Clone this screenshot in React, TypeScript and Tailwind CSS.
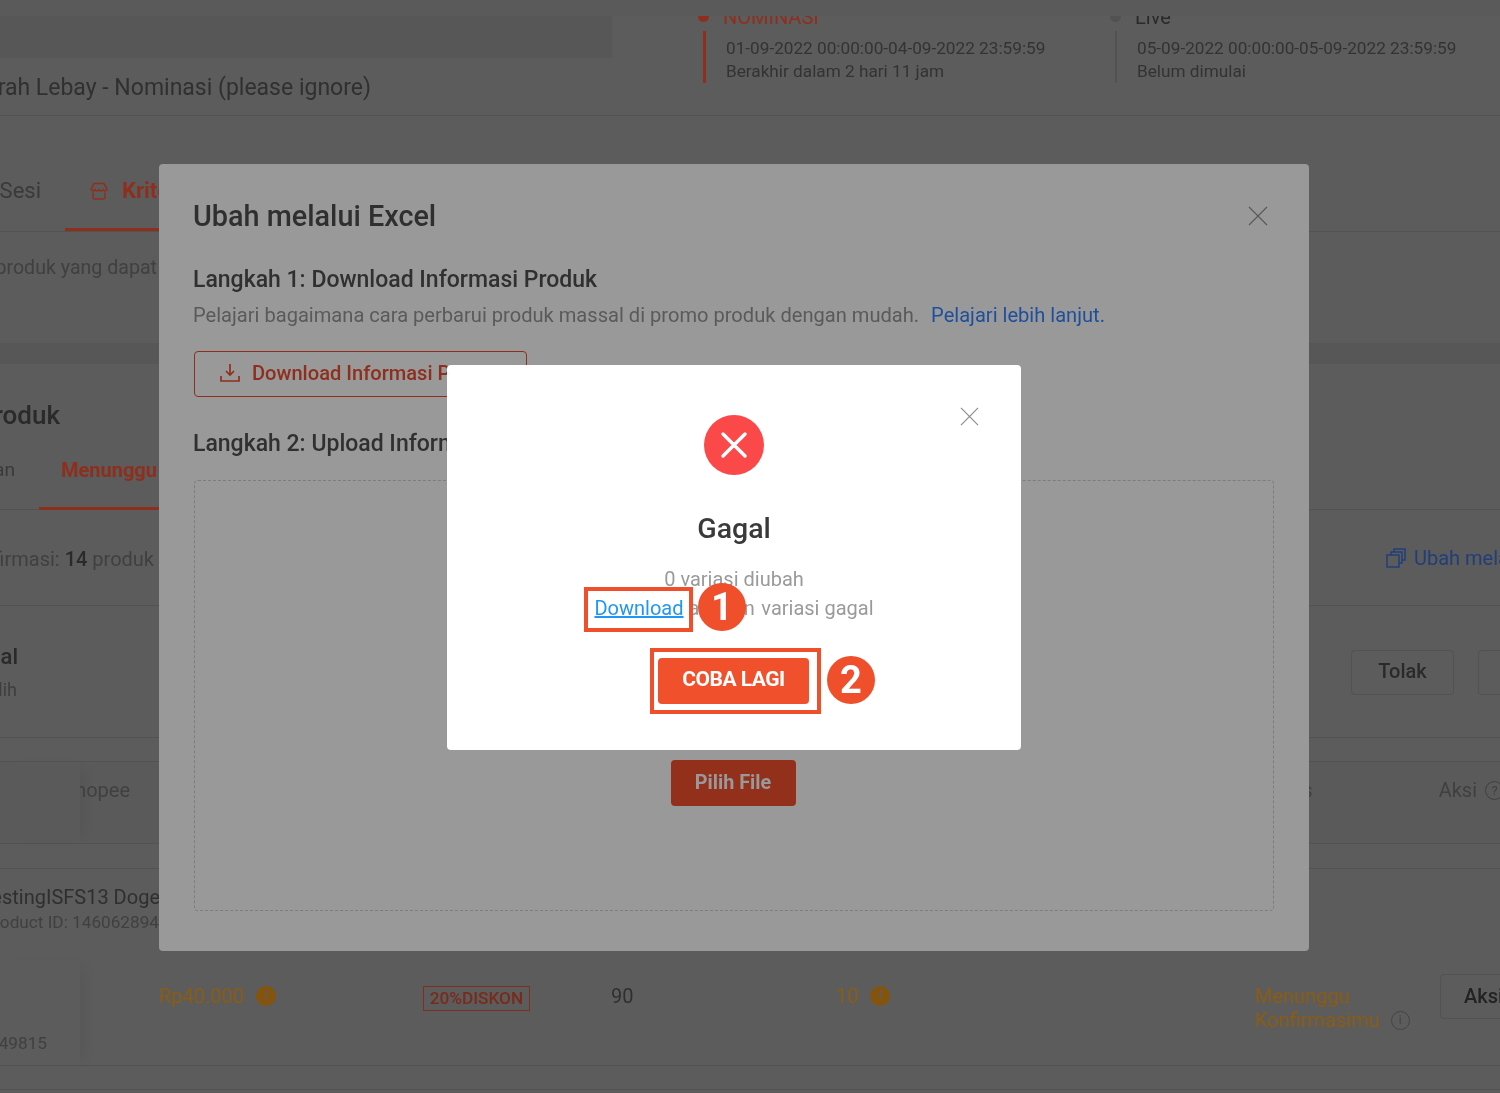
import React from "react";

function CloseIcon({ className }: { className: string }) {
  return (
    <svg viewBox="0 0 20 20" className={className} fill="none" stroke="currentColor" strokeWidth="1.2">
      <path d="M1 1l18 18M19 1L1 19" />
    </svg>
  );
}

function AlertDot() {
  return (
    <span className="flex h-5 w-5 items-center justify-center rounded-full bg-[#85540c] text-[14px] font-bold leading-none text-[#5c5c5c]">
      !
    </span>
  );
}

function ClippedLeft({ width, className, children }: { width: string; className?: string; children: React.ReactNode }) {
  return (
    <div className={`flex justify-end overflow-hidden whitespace-nowrap ${width} ${className ?? ""}`}>
      <span className="shrink-0">{children}</span>
    </div>
  );
}

function Timeline({ line, dot, label, labelColor, date, note, lineWidth }: {
  line: string; dot: string; label: string; labelColor: string; date: string; note: string; lineWidth: string;
}) {
  return (
    <div className="flex flex-col">
      <div className="-mt-[7px] flex h-[15px] items-center">
        <span className={`ml-[-5px] h-[11px] w-[11px] rounded-full ${dot}`} />
        <span className={`ml-[14px] text-[20px] leading-none ${labelColor}`}>{label}</span>
      </div>
      <div className="mt-[7px] flex h-[52px] gap-[20px]">
        <div className={`h-full ${lineWidth} ${line}`} />
        <div className="mt-[6px] text-[17.2px] leading-[23px] text-[#333]">
          <div className="whitespace-nowrap">{date}</div>
          <div className="whitespace-nowrap">{note}</div>
        </div>
      </div>
    </div>
  );
}

function Page() {
  return (
    <div className="flex h-full flex-col overflow-hidden bg-[#5c5c5c] font-['Roboto',sans-serif]">
      <div className="h-4 shrink-0 bg-[#5a5a5a]" />
      <div className="flex h-[100px] shrink-0 overflow-hidden border-b border-[#525252]">
        <div className="w-[612px] shrink-0">
          <div className="h-[42px] bg-[#575757]" />
          <ClippedLeft width="w-[371px]" className="mt-[16px] text-[23px] leading-[28px] text-[#303030]">
            Tes Murah Lebay - Nominasi (please ignore)
          </ClippedLeft>
        </div>
        <div className="ml-[91px] w-[412px]">
          <Timeline line="bg-[#8e2f1e]" lineWidth="w-[3px]" dot="bg-[#8e2f1e]" label="NOMINASI" labelColor="text-[#8e2f1e]" date="01-09-2022 00:00:00-04-09-2022 23:59:59" note="Berakhir dalam 2 hari 11 jam" />
        </div>
        <Timeline line="bg-[#525252]" lineWidth="w-[2px]" dot="bg-[#525252]" label="Live" labelColor="text-[#2a2a2a]" date="05-09-2022 00:00:00-05-09-2022 23:59:59" note="Belum dimulai" />
      </div>

      <div className="h-[227px] shrink-0">
        <div className="flex h-[116px] items-end border-b border-[#525252]">
          <div className="flex h-[75px] w-[65px] items-start pt-[22px] text-[22px] leading-[26px] text-[#3a3a3a]">
            <ClippedLeft width="w-[41px]">Sesi</ClippedLeft>
          </div>
          <div className="flex h-[75px] w-[300px] items-start gap-[13px] border-b-[3px] border-[#8e2f1e] pl-[24px] pt-[22px] text-[22px] font-bold leading-[26px] text-[#8e2f1e]">
            <svg viewBox="0 0 20 20" className="mt-[3px] h-[20px] w-[20px]" fill="none" stroke="currentColor" strokeWidth="1.5">
              <path d="M5 2.500h10l3 6c-1.500 2-3 2-4 0-1 2-3 2-4 0-1 2-3 2-4 0-1 2-2.500 2-4 0zM4 11.500v4.500a2 2 0 0 0 2 2h8a2 2 0 0 0 2-2v-4.500" />
            </svg>
            Kriteria Produk
          </div>
        </div>
        <ClippedLeft width="w-[157px]" className="mt-[23px] text-[19.600px] leading-[26px] text-[#404040]">
          Tentukan produk yang dapat
        </ClippedLeft>
      </div>

      <div className="h-[21px] shrink-0 bg-[#575757]" />

      <div className="flex h-[146px] shrink-0 flex-col">
        <ClippedLeft width="w-[60px]" className="mt-[36px] text-[26px] font-medium leading-[30px] text-[#2a2a2a]">
          Daftar Produk
        </ClippedLeft>
        <div className="mt-[29px] flex h-[51px] items-start border-b border-[#525252]">
          <ClippedLeft width="w-[39px]" className="text-[19.200px] leading-[22px] text-[#3a3a3a]">
            <span className="mr-[24px]">Semuaan</span>
          </ClippedLeft>
          <div className="h-[51px] w-[300px] border-b-[3px] border-[#8e2f1e] pl-[22px] text-[20px] font-bold leading-[22px] text-[#8e2f1e]">
            Menunggu Konfirmasi
          </div>
        </div>
      </div>

      <div className="flex h-[96px] shrink-0 items-center justify-between border-b border-[#525252] pt-[2px]">
        <ClippedLeft width="w-[154px]" className="text-[20px] leading-[24px] text-[#404040]">
          Menunggu Konfirmasi: <b className="font-medium text-[#2a2a2a]">14</b> produk
        </ClippedLeft>
        <div className="mb-[2px] flex w-[114px] shrink-0 items-center gap-[8px] whitespace-nowrap text-[20px] leading-[24px] text-[#203f78]">
          <svg viewBox="0 0 20 20" className="h-[20px] w-[20px] shrink-0" fill="none" stroke="currentColor" strokeWidth="1.500">
            <path d="M1 7h12v12H1zM5 7V4h11v11h-3M8 4V1h11v11h-3" />
          </svg>
          Ubah melalui Excel
        </div>
      </div>

      <div className="flex h-[132px] shrink-0 items-center justify-between border-b border-[#525252]">
        <div className="pt-[2px] text-[#3e3e3e]">
          <ClippedLeft width="w-[18px]" className="text-[22px] font-medium leading-[28px] text-[#2a2a2a]">Massal</ClippedLeft>
          <ClippedLeft width="w-[17px]" className="mt-[7px] text-[18px] leading-[24px]">Pilih</ClippedLeft>
        </div>
        <div className="flex gap-[24px] pt-[1px]">
          <div className="flex h-[45px] w-[103px] items-center justify-center rounded-[4px] border border-[#525252] pb-[2px] text-[20px] font-medium text-[#2a2a2a]">Tolak</div>
          <div className="h-[45px] w-[22px] rounded-l-[4px] border-y border-l border-[#525252]" />
        </div>
      </div>

      <div className="h-[23px] shrink-0" />

      <div className="flex h-[83px] shrink-0 items-start border-y border-[#525252] bg-[#5a5a5a] text-[20px] leading-[26px] text-[#404040]">
        <div className="h-full w-[80px] shrink-0 shadow-[10px_0_14px_-8px_rgba(0,0,0,0.08)]" />
        <ClippedLeft width="w-[50px]" className="mt-[15px]">Shopee</ClippedLeft>
        <div className="ml-auto mr-[126px] mt-[15px]">Status</div>
        <div className="mr-[-4px] mt-[15px] flex items-center gap-[8px]">
          <span>Aksi</span>
          <span className="flex h-[19px] w-[19px] items-center justify-center rounded-full border border-[#404040] text-[13px] leading-none">?</span>
        </div>
      </div>

      <div className="h-[24px] shrink-0" />

      <div className="flex h-[198px] shrink-0 flex-col border-y border-[#525252]">
        <div className="h-[91px] shrink-0">
          <ClippedLeft width="w-[160px]" className="pt-[15px] text-[20px] leading-[26px] text-[#2f2f2f]">TestingISFS13 Doge</ClippedLeft>
          <ClippedLeft width="w-[159px]" className="mt-[1px] text-[17.200px] leading-[22px] text-[#404040]">Product ID: 146062894</ClippedLeft>
        </div>
        <div className="flex h-[105px] text-[20px] leading-[24px]">
          <div className="flex w-[159px] shrink-0">
            <div className="h-full w-[80px] shadow-[10px_0_14px_-8px_rgba(0,0,0,0.08)]">
              <ClippedLeft width="w-[47px]" className="pt-[72px] text-[17.200px] leading-[22px] text-[#404040]">146049815</ClippedLeft>
            </div>
          </div>
          <div className="mt-[24px] flex h-[24px] w-[264px] shrink-0 items-center gap-[12px] text-[#8a5c14]">
            <span>Rp40.000</span>
            <AlertDot />
          </div>
          <div className="mt-[26px] w-[188px] shrink-0">
            <span className="flex h-[25px] w-[107px] items-center justify-center border border-[#7f2f20] pb-px text-[17.200px] font-medium text-[#7a2a1a]">20%DISKON</span>
          </div>
          <div className="mt-[24px] w-[225px] shrink-0 text-[#2f2f2f]">90</div>
          <div className="mt-[24px] flex h-[24px] w-[419px] shrink-0 items-center gap-[12px] text-[#8a5c14]">
            <span>10</span>
            <AlertDot />
          </div>
          <div className="mt-[24px] w-[185px] shrink-0 text-[#8a5c14]">
            <div>Menunggu</div>
            <div className="flex items-center gap-[11px] whitespace-nowrap">
              Konfirmasimu
              <span className="flex h-[19px] w-[19px] items-center justify-center rounded-full border border-[#454545] text-[12px] leading-none text-[#454545]">i</span>
            </div>
          </div>
          <div className="mt-[14px] h-[45px] w-[80px] shrink-0 rounded-[4px] border border-[#525252] pl-[23px] pt-[9px] text-[20px] font-medium text-[#222]">Aksi</div>
        </div>
      </div>

      <div className="h-[24px] shrink-0 border-b border-[#525252]" />
    </div>
  );
}

function ExcelModal() {
  return (
    <div className="absolute left-[159px] top-[164px] flex h-[787px] w-[1150px] flex-col rounded-[4px] bg-[#999999] px-[34px] pb-[40px] pt-[34px] font-['Roboto',sans-serif]">
      <div className="flex items-center justify-between">
        <h1 className="text-[28.800px] font-medium leading-[36px] text-[#2f2f2f]">Ubah melalui Excel</h1>
        <CloseIcon className="mr-[7px] h-[20px] w-[20px] text-[#5a5a5a]" />
      </div>
      <h2 className="mt-[31px] text-[23px] font-medium leading-[30px] text-[#303030]">Langkah 1: Download Informasi Produk</h2>
      <p className="mt-[6px] whitespace-nowrap text-[20.100px] leading-[28px] text-[#5a5a5a]">
        Pelajari bagaimana cara perbarui produk massal di promo produk dengan mudah.{" "}
        <span className="ml-[7px] text-[#1f4f9c]">Pelajari lebih lanjut.</span>
      </p>
      <div className="ml-px mt-[22px] flex h-[46px] w-[333px] items-center gap-[11px] rounded-[4px] border border-[#8e2f1e] pb-[2px] pl-[24px] text-[20.100px] font-medium text-[#8e2f1e]">
        <svg viewBox="0 0 22 22" className="h-[22px] w-[22px]" fill="none" stroke="currentColor" strokeWidth="1.700">
          <path d="M11 2v11M7 9l4 4 4-4M2 14v5h18v-5" />
        </svg>
        Download Informasi Produk
      </div>
      <h2 className="mt-[32px] text-[23px] font-medium leading-[30px] text-[#303030]">Langkah 2: Upload Informasi Produk</h2>
      <div className="ml-px mt-[21px] flex h-[431px] w-[1080px] flex-col items-center justify-end rounded-[4px] border border-dashed border-[#7d7d7d] pb-[104px] pr-[2px]">
        <div className="flex h-[46px] w-[125px] items-center justify-center rounded-[4px] bg-[#93301c] text-[19.800px] font-bold text-[#999999]">
          Pilih File
        </div>
      </div>
    </div>
  );
}

function FailDialog() {
  return (
    <div className="absolute left-[447px] top-[365px] flex h-[385px] w-[574px] flex-col items-center rounded-[4px] bg-white pt-[50px] font-['Roboto',sans-serif]">
      <CloseIcon className="absolute right-[42px] top-[42px] h-[19px] w-[19px] text-[#8a8a8a]" />
      <div className="flex h-[60px] w-[60px] items-center justify-center rounded-full bg-[#fb4848]">
        <svg viewBox="0 0 28 28" className="h-[28px] w-[28px]" fill="none" stroke="white" strokeWidth="3.500" strokeLinecap="round">
          <path d="M3 3l22 22M25 3L3 25" />
        </svg>
      </div>
      <h3 className="mt-[36px] text-[28.500px] font-medium leading-[36px] text-[#3a3a3a]">Gagal</h3>
      <p className="mt-[18px] text-[20px] leading-[29px] text-[#9a9a9a]">0 variasi diubah</p>
      <p className="whitespace-nowrap text-[20px] leading-[29px] text-[#9a9a9a]">
        <span className="text-[#2196f3] underline">Download</span> <span className="tracking-[1.5px]">alasan</span> variasi gagal
      </p>
      <div className="-ml-px mt-[35px] flex h-[46px] w-[151px] items-center justify-center rounded-[4px] bg-[#f1502d] pb-[2px] text-[21px] font-bold tracking-[-0.5px] text-white">
        COBA LAGI
      </div>

      {/* penanda langkah */}
      <div className="absolute left-[137px] top-[222px] h-[45px] w-[109px] border-4 border-[#ef4f2b]" />
      <div className="absolute left-[251px] top-[218px] flex h-[48px] w-[48px] items-center justify-center rounded-full bg-[#ef4f2b] text-[38px] font-bold text-white">1</div>
      <div className="absolute left-[203px] top-[283px] h-[66px] w-[171px] border-4 border-[#ef4f2b]" />
      <div className="absolute left-[380px] top-[291px] flex h-[48px] w-[48px] items-center justify-center rounded-full bg-[#ef4f2b] text-[38px] font-bold text-white">2</div>
    </div>
  );
}

export default function App() {
  return (
    <div className="relative h-[1093px] w-[1500px] overflow-hidden blur-[0.5px]">
      <Page />
      <ExcelModal />
      <FailDialog />
    </div>
  );
}
